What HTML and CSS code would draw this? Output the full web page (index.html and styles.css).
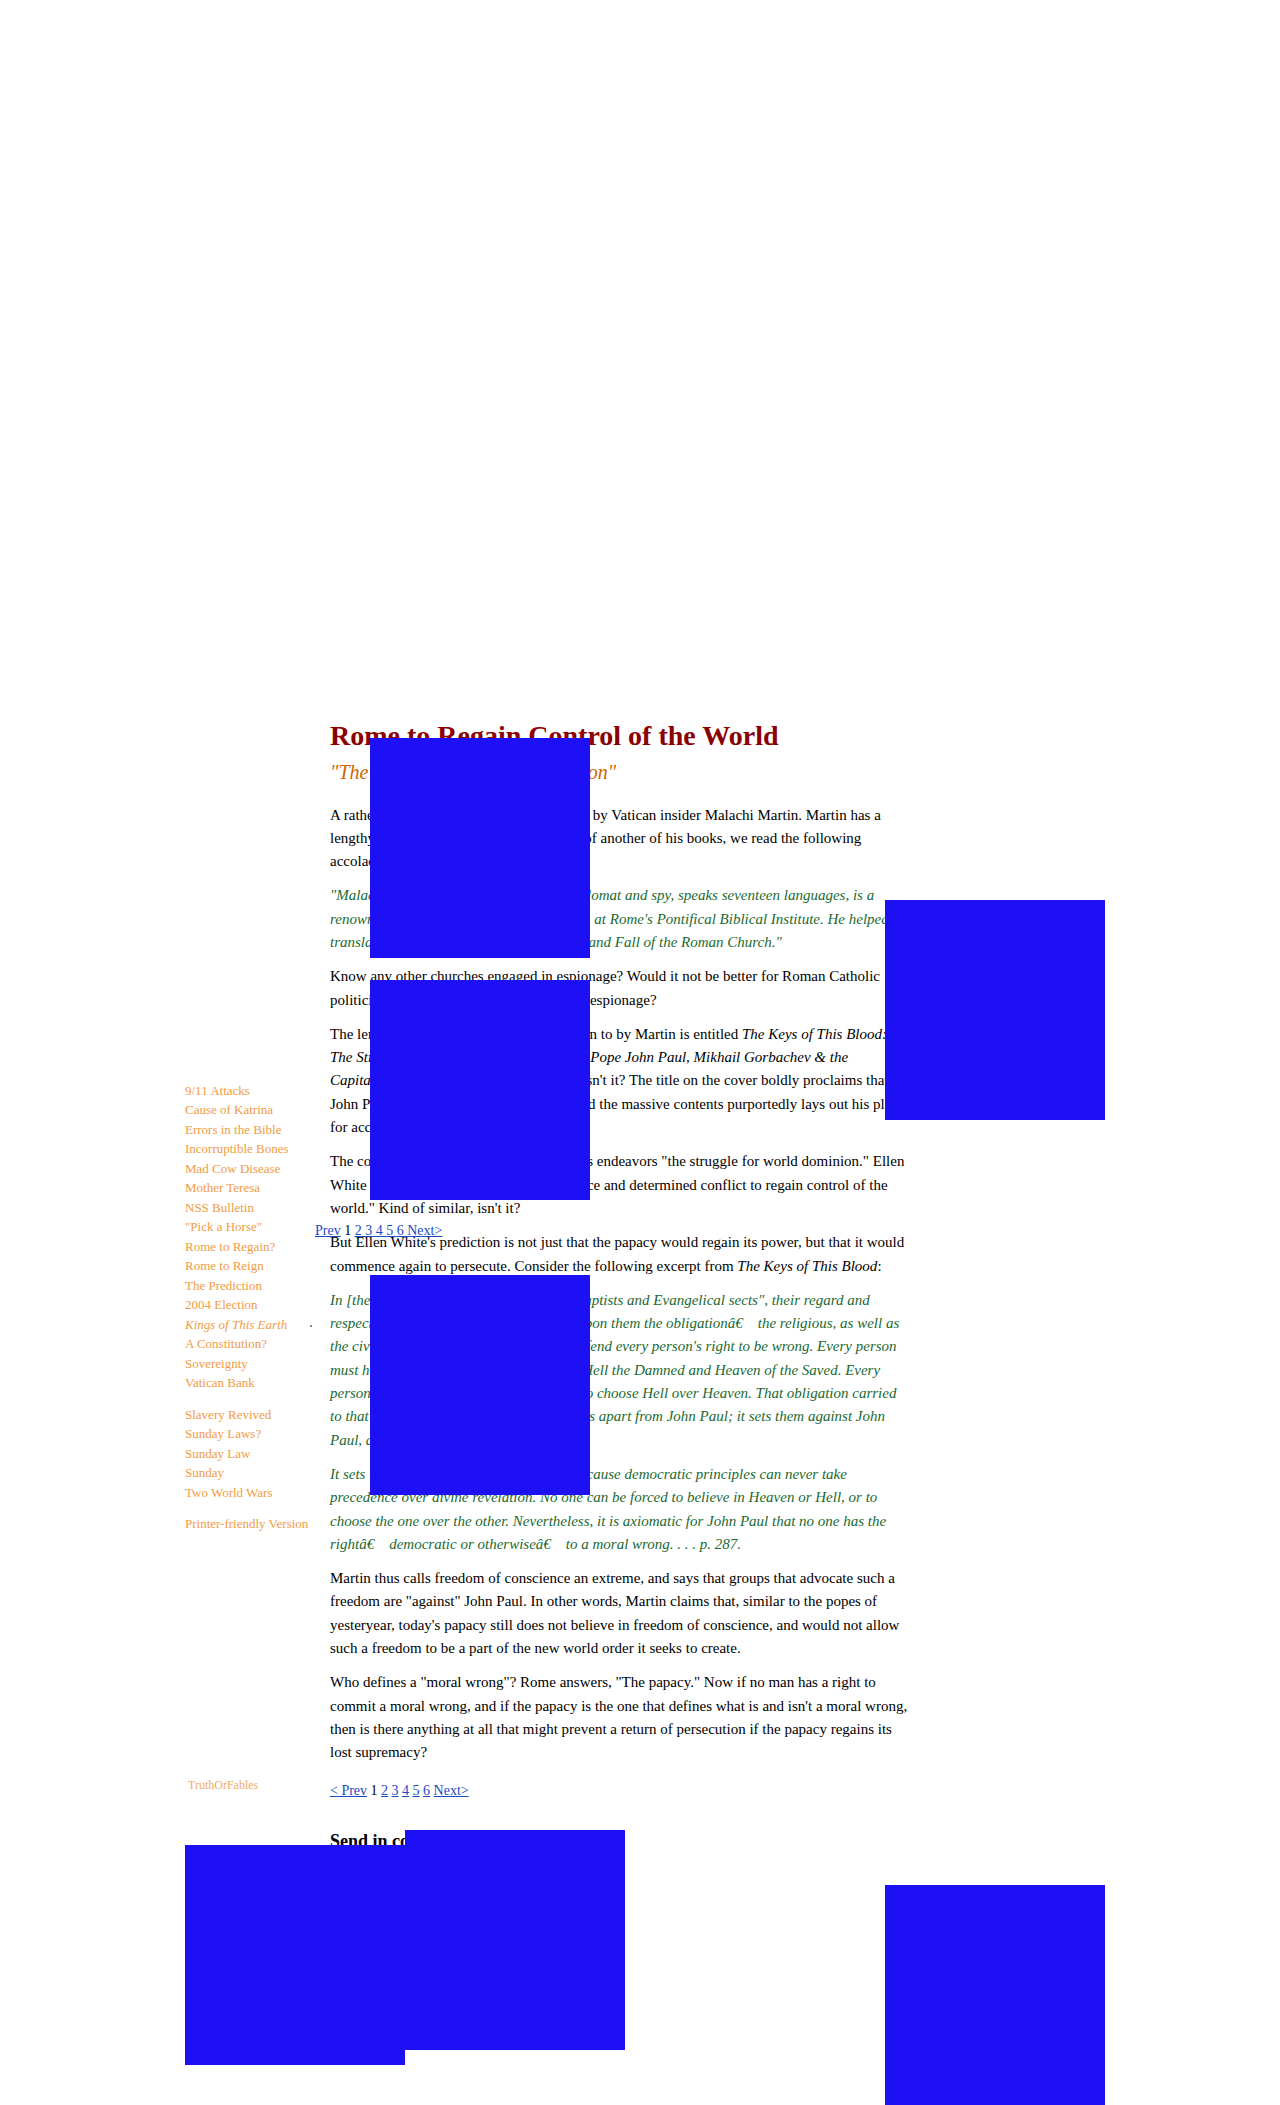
FILE: index.html
```html
<!DOCTYPE html>
<html>
<head>
<meta charset="utf-8">
<title>Rome to Regain Control of the World</title>
<link rel="stylesheet" href="styles.css">
</head>
<body>
<div class="layout">
  <div class="sidebar">
    <ul class="nav">
      <li><a href="#">9/11 Attacks</a></li>
      <li><a href="#">Cause of Katrina</a></li>
      <li><a href="#">Errors in the Bible</a></li>
      <li><a href="#">Incorruptible Bones</a></li>
      <li><a href="#">Mad Cow Disease</a></li>
      <li><a href="#">Mother Teresa</a></li>
      <li><a href="#">NSS Bulletin</a></li>
      <li><a href="#">"Pick a Horse"</a></li>
      <li><a href="#">Rome to Regain?</a></li>
      <li><a href="#">Rome to Reign</a></li>
      <li><a href="#">The Prediction</a></li>
      <li><a href="#">2004 Election</a></li>
      <li class="current">Kings of This Earth<span class="dot"></span></li>
      <li><a href="#">A Constitution?</a></li>
      <li><a href="#">Sovereignty</a></li>
      <li><a href="#">Vatican Bank</a></li>
    </ul>
    <ul class="nav group">
      <li><a href="#">Slavery Revived</a></li>
      <li><a href="#">Sunday Laws?</a></li>
      <li><a href="#">Sunday Law</a></li>
      <li><a href="#">Sunday</a></li>
      <li><a href="#">Two World Wars</a></li>
    </ul>
    <ul class="nav group">
      <li><a href="#">Printer-friendly Version</a></li>
    </ul>
    <div class="site-name">TruthOrFables</div>
  </div>

  <div class="main">
    <h1 class="title">Rome to Regain Control of the World</h1>
    <h2 class="subtitle">"The Struggle for World Dominion"</h2>

    <p>A rather interesting book has been written,&nbsp; by Vatican insider Malachi Martin. Martin has a lengthy resume. On the back of the cover, of another of his books, we read the following accolades:</p>

    <p class="quote">"Malachi Martin, former Jesuit priest,&nbsp; diplomat and spy, speaks seventeen languages, is a renowned theologian, and was a professor,&nbsp; at Rome's Pontifical Biblical Institute. He helped translate the Bible, and wrote The Decline and Fall of the Roman Church."</p>

    <p>Know any other churches engaged in espionage? Would it not be better for Roman Catholic politicians to stay away from the church in espionage?</p>

    <p>The lengthy volumes usually given attention to by Martin is entitled <i>The Keys of This Blood: The Struggle for World Dominion Between Pope John Paul, Mikhail Gorbachev &amp; the Capitalist West</i>. Quite a wordy book title, isn't it? The title on the cover boldly proclaims that John Paul II is now the man of the hour, and the massive contents purportedly lays out his plan for accomplishing that goal.</p>

    <p>The cover of the book describes John Paul's endeavors "the struggle for world dominion." Ellen White said that there would soon be "a fierce and determined conflict to regain control of the world." Kind of similar, isn't it?</p>

    <p>But Ellen White's prediction is not just that the papacy would regain its power, but that it would commence again to persecute. Consider the following excerpt from <i>The Keys of This Blood</i>:</p>

    <p class="quote">In [the views of John Paul] concerning "Baptists and Evangelical sects", their regard and respect for the choices of others imposes upon them the obligationâ€&emsp;the religious, as well as the civil authorities, to both protect and defend every person's right to be wrong. Every person must have the freedom to choose between Hell the Damned and Heaven of the Saved. Every person must be allowed the freedom even to choose Hell over Heaven. That obligation carried to that extreme is what sets all&nbsp; these groups apart from John Paul; it sets them against John Paul, and against the papacy.</p>

    <p class="quote">It sets them against the papacy of Rome because democratic principles can never take precedence over divine revelation. No one can be forced to believe in Heaven or Hell, or to choose the one over the other. Nevertheless, it is axiomatic for John Paul that no one has the rightâ€&emsp;democratic or otherwiseâ€&emsp;to a moral wrong. . . . p. 287.</p>

    <p>Martin thus calls freedom of conscience an extreme, and says that groups that advocate such a freedom are "against" John Paul. In other words, Martin claims that, similar to the popes of yesteryear, today's papacy still does not believe in freedom of conscience, and would not allow such a freedom to be a part of the new world order it seeks to create.</p>

    <p>Who defines a "moral wrong"? Rome answers, "The papacy." Now if no man has a right to commit a moral wrong, and if the papacy is the one that defines what is and isn't a moral wrong, then is there anything at all that might prevent a return of persecution if the papacy regains its lost supremacy?</p>

    <p class="pager"><a href="#">&lt; Prev</a> 1 <a href="#">2</a> <a href="#">3</a> <a href="#">4</a> <a href="#">5</a> <a href="#">6</a> <a href="#">Next&gt;</a></p>

    <h3 class="comments">Send in comments</h3>
  </div>
</div>

<div class="pager-top"><a href="#">Prev</a> 1 <span class="ul"><a href="#">2</a> <a href="#">3</a> <a href="#">4</a> <a href="#">5</a> <a href="#">6</a> <a href="#">Next&gt;</a></span></div>

<div class="block b1"></div>
<div class="block b2"></div>
<div class="block b3"></div>
<div class="block b4"></div>
<div class="block b5"></div>
<div class="block b6"></div>
<div class="block b7"></div>
</body>
</html>
```

FILE: styles.css
```css
html, body {
  margin: 0;
  padding: 0;
  background: #ffffff;
}

body {
  font-family: "Liberation Serif", "Times New Roman", serif;
  color: #000000;
  position: relative;
  min-height: 2105px;
  overflow: hidden;
}

.layout {
  display: flex;
  align-items: flex-start;
  padding-left: 185px;
  padding-top: 719.5px;
}

/* ---------- sidebar ---------- */
.sidebar {
  width: 145px;
  flex: none;
  padding-top: 361px;
}

.nav {
  list-style: none;
  margin: 0;
  padding: 0;
  font-size: 13px;
  line-height: 19.5px;
  white-space: nowrap;
}

.nav.group {
  margin-top: 12.2px;
}

.nav a {
  color: #f39b42;
  text-decoration: none;
}

.nav .current {
  color: #f39b42;
  font-style: italic;
}

.dot {
  display: inline-block;
  width: 2px;
  height: 2px;
  background: #8a8a8a;
  margin-left: 23px;
  vertical-align: middle;
}

.site-name {
  margin-top: 242px;
  padding-left: 3px;
  font-size: 12px;
  line-height: 18px;
  color: #f4a96a;
}

/* ---------- main column ---------- */
.main {
  width: 579px;
  flex: none;
}

.title {
  margin: 0;
  font-size: 28px;
  line-height: 32px;
  font-weight: bold;
  color: #8b0000;
}

.subtitle {
  margin: 8.75px 0 19.25px;
  font-size: 20px;
  line-height: 24px;
  font-weight: normal;
  font-style: italic;
  color: #cc6600;
}

.main p {
  margin: 0 0 11px;
  font-size: 15px;
  line-height: 23.3px;
}

.main p.quote {
  font-style: italic;
  color: #1b6a31;
}

.main p.pager {
  margin-top: 15px;
  font-size: 14px;
}

.pager a,
.pager-top a {
  color: #1a4bc2;
  text-decoration: underline;
}

.comments {
  margin: 27px 0 0;
  font-size: 18px;
  line-height: 22px;
  font-weight: bold;
}

/* top pager sits over the article text */
.pager-top {
  position: absolute;
  left: 315px;
  top: 1223px;
  font-size: 14px;
  line-height: 16px;
  white-space: nowrap;
}

.pager-top .ul {
  text-decoration: underline;
  color: #1a4bc2;
}

/* ---------- overlay blocks ---------- */
.block {
  position: absolute;
  width: 220px;
  height: 220px;
  background: #1e10f5;
}

.b1 { left: 370px; top: 738px; }
.b2 { left: 370px; top: 980px; }
.b3 { left: 885px; top: 900px; }
.b4 { left: 370px; top: 1275px; }
.b5 { left: 405px; top: 1830px; }
.b6 { left: 185px; top: 1845px; }
.b7 { left: 885px; top: 1885px; }
```
